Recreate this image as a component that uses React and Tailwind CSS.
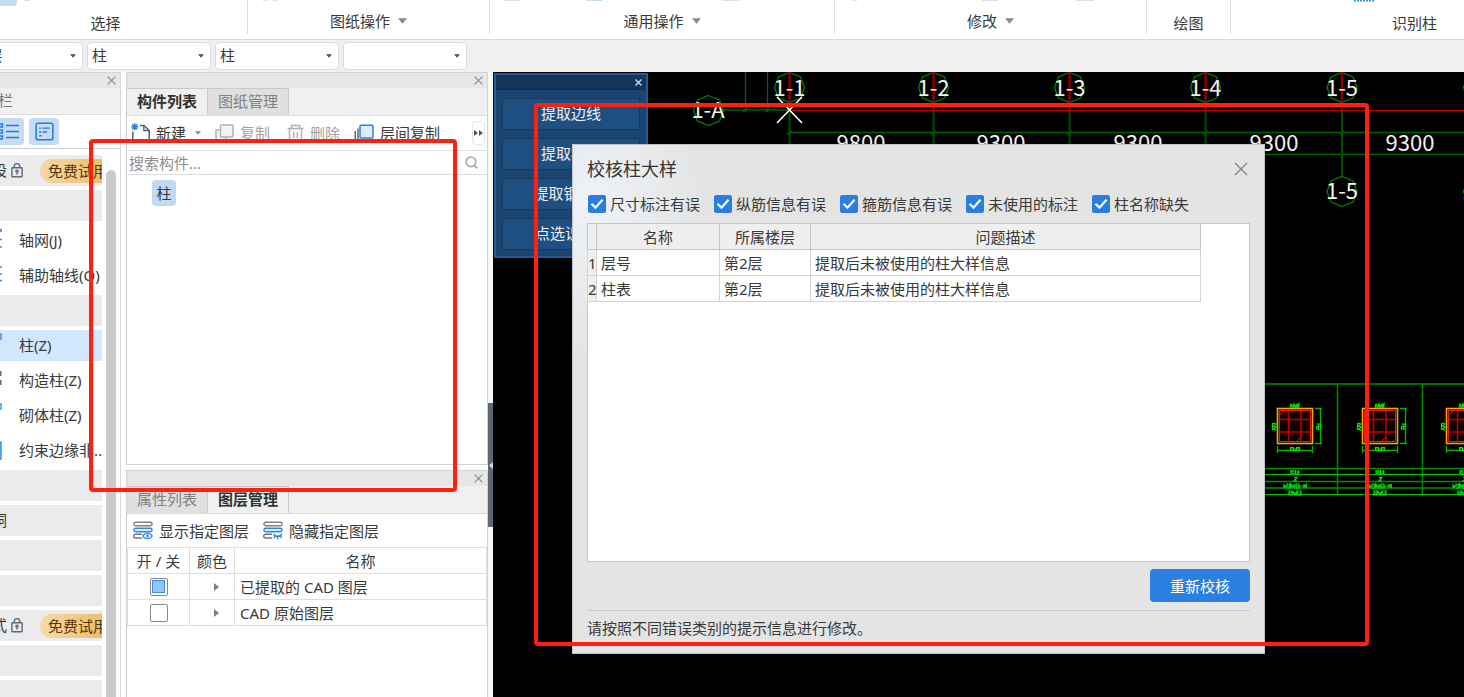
import React from "react";

const ribbonGroups = [
  { label: "选择", cls: "-ml-9 w-[284px]", low: true },
  { label: "图纸操作", cls: "w-[242px]", arrow: true },
  { label: "通用操作", cls: "w-[345px]", arrow: true },
  { label: "修改", cls: "w-[312px]", arrow: true },
  { label: "绘图", cls: "w-[84px]", low: true },
  { label: "识别柱", cls: "w-[368px]", low: true },
];

const selects = [
  { id: "floor", label: "楼层", value: "第2层" },
  { id: "category", label: "构件大类", value: "柱" },
  { id: "type", label: "构件类型", value: "柱" },
  { id: "member", label: "构件", value: "" },
];

const navItems = [
  { kind: "bar", tail: "预设", trial: true },
  { kind: "bar" },
  { kind: "item", label: "轴网(J)", icon: "grid" },
  { kind: "item", label: "辅助轴线(O)", icon: "axis" },
  { kind: "bar" },
  { kind: "item", label: "柱(Z)", icon: "col", selected: true },
  { kind: "item", label: "构造柱(Z)", icon: "dots" },
  { kind: "item", label: "砌体柱(Z)", icon: "col" },
  { kind: "item", label: "约束边缘非..", icon: "solid" },
  { kind: "bar" },
  { kind: "bar", tail: "门窗洞" },
  { kind: "bar" },
  { kind: "bar" },
  { kind: "bar", tail: "装配式", trial: true },
  { kind: "bar" },
  { kind: "bar" },
];

const checks = ["尺寸标注有误", "纵筋信息有误", "箍筋信息有误", "未使用的标注", "柱名称缺失"];

const issues = [
  { name: "层号", floor: "第2层", text: "提取后未被使用的柱大样信息" },
  { name: "柱表", floor: "第2层", text: "提取后未被使用的柱大样信息" },
];

const extractButtons = ["提取边线", "提取标注", "提取钢筋线", "点选识别 ▾"];

function Caret({ className = "" }) {
  return (
    <svg className={className} width="10" height="6" viewBox="0 0 10 6" aria-hidden="true">
      <path d="M0 0h10L5 6z" fill="currentColor" />
    </svg>
  );
}

function Cross({ size = 9, width = 1.3 }) {
  return (
    <svg width={size} height={size} viewBox="0 0 10 10" aria-hidden="true">
      <path d="M0.7 0.7l8.6 8.6M9.3 0.7L0.7 9.3" stroke="currentColor" strokeWidth={width} fill="none" />
    </svg>
  );
}

function PanelHeader() {
  return (
    <div className="flex h-4 shrink-0 items-center justify-end border-t border-[#d2d2d2] bg-[#e6e6e6] pr-1 text-[#8c8c8c]">
      <button type="button" aria-label="关闭面板">
        <Cross />
      </button>
    </div>
  );
}

function LockIcon() {
  return (
    <svg width="12" height="15" viewBox="0 0 12 15" fill="none" stroke="#5d6b7e" strokeWidth="1.4" aria-hidden="true">
      <rect x="0.9" y="4.8" width="10.2" height="9" rx="0.5" />
      <path d="M3.2 4.8V3.4a2.8 2.8 0 0 1 5.6 0v1.4" />
      <circle cx="6" cy="8.3" r="1.1" />
      <path d="M6 9.2v2.2" />
    </svg>
  );
}

function NavIcon({ kind }) {
  return (
    <svg className="shrink-0" width="16" height="26" viewBox="0 0 16 26" fill="none" stroke="#3d8bea" strokeWidth="1.4" aria-hidden="true">
      {kind === "grid" && <path d="M3 2v22M0 12.500h16M0 20h16M12 5l4-3M13 2l3 3" />}
      {kind === "axis" && <path d="M3 2v22M0 5h16M0 12h16M0 18.500h16" />}
      {kind === "col" && <rect x="2" y="2" width="13" height="5" />}
      {kind === "dots" && <path d="M14 4v5M14 13v5" stroke="#67707c" strokeWidth="3" />}
      {kind === "solid" && <path d="M1 5h14v17H1zM1 10h14M1 16h14M8 5v17" fill="#8bbcf7" />}
    </svg>
  );
}

function NavPanel() {
  return (
    <aside className="flex w-[121px] shrink-0 flex-col border-r border-[#d9d9d9] bg-white">
      <PanelHeader />
      <div className="flex h-[27px] shrink-0 items-center border-b border-[#dddddd] bg-[#f0f0f0] pb-[2px] text-[#777777]">
        <span className="flex w-[13px] justify-end whitespace-nowrap">导航栏</span>
      </div>
      <div className="flex h-[34px] shrink-0 items-center gap-[5px] border-b border-[#d2d2d2]">
        <button type="button" aria-label="列表视图" className="flex h-[27px] w-6 items-center rounded-r bg-[#c5dcf4]">
          <svg width="20" height="17" viewBox="0 0 20 17" fill="none" stroke="#2479e4" strokeWidth="1.500" aria-hidden="true">
            <path d="M6 2.500h13M6 8.500h13M6 14.500h13" />
            <rect x="-1" y="1" width="3.400" height="3" />
            <rect x="-1" y="7" width="3.400" height="3" />
            <rect x="-1" y="13" width="3.400" height="3" />
          </svg>
        </button>
        <button type="button" aria-label="卡片视图" className="flex h-[27px] w-[30px] items-center justify-center rounded bg-[#c5dcf4]">
          <svg width="19" height="19" viewBox="0 0 20 20" fill="none" stroke="#2479e4" strokeWidth="1.600" aria-hidden="true">
            <rect x="1.200" y="1.200" width="17.600" height="17.600" rx="2" />
            <path d="M4.500 6.500h2M8 6.500h7.500M4.500 10.500h2M8 10.500h4.500M4.500 14.500h2.500" strokeWidth="1.400" />
          </svg>
        </button>
      </div>
      <div className="flex min-h-0 flex-1 justify-between overflow-hidden">
        <ul className="flex w-[102px] flex-col gap-1 overflow-hidden pt-[6px]">
          {navItems.map((item, i) =>
            item.kind === "bar" ? (
              <li key={i} className="flex h-[31px] shrink-0 items-center bg-[#ebebeb]">
                <span className="flex w-[7px] shrink-0 justify-end pb-[2px] whitespace-nowrap">{item.tail}</span>
                {item.trial && (
                  <>
                    <span className="ml-1 shrink-0">
                      <LockIcon />
                    </span>
                    <span className="ml-[17px] h-6 shrink-0 rounded-full bg-linear-to-r from-[#f8d8a8] to-[#e8b953] pr-3 pl-2 leading-6 text-[#5b3408]">
                      免费试用
                    </span>
                  </>
                )}
              </li>
            ) : (
              <li
                key={i}
                className={
                  "flex h-[31px] shrink-0 items-center gap-[17px] pb-[2px] whitespace-nowrap " +
                  (item.selected ? "bg-[#d3e7fe]" : "")
                }
              >
                <span className="flex w-[2px] shrink-0 justify-end">
                  <NavIcon kind={item.icon} />
                </span>
                <a href="#nav" className="shrink-0">
                  {item.label}
                </a>
              </li>
            )
          )}
        </ul>
        <div className="mt-[21px] mr-1 w-[10px] rounded-t-full bg-[#cbcbcb]" />
      </div>
    </aside>
  );
}

function Tabs({ items, active }) {
  return (
    <div className="flex h-7 shrink-0 border-b border-[#dcdcdc] bg-[#f0f0f0]" role="tablist">
      {items.map((t, i) => (
        <button
          key={t}
          type="button"
          role="tab"
          aria-selected={i === active}
          className={
            "w-[81px] border-t border-r border-[#c8cbce] pb-[2px] " +
            (i === active ? "bg-[#f0f0f0] font-bold text-[#333333]" : "bg-[#e0e0e0] text-[#808080]")
          }
        >
          {t}
        </button>
      ))}
    </div>
  );
}

function LayerIcon({ hidden }) {
  return (
    <svg width="20" height="19" viewBox="0 0 20 19" fill="none" strokeWidth="1.400" aria-hidden="true">
      <rect x="1" y="1.200" width="18" height="3.600" rx="1.600" stroke="#7a838e" />
      <rect x="1" y="7.200" width="18" height="3.600" rx="1.600" stroke="#3385ea" fill="#dcebfd" />
      <path d="M9 13.200H2.600a1.800 1.800 0 0 0 0 3.800H9" stroke="#6e7884" />
      {hidden ? (
        <path d="M10.500 13c2 3 6.500 3 8.500 0M12 15l-1 2M14.700 15.600v2.600M17.500 15l1 2" stroke="#3385ea" />
      ) : (
        <>
          <path d="M9.800 15c2-3.500 7.400-3.500 9.400 0-2 3.500-7.400 3.500-9.400 0z" stroke="#3385ea" fill="#ffffff" />
          <circle cx="14.500" cy="15" r="1.400" fill="#3385ea" />
        </>
      )}
    </svg>
  );
}

function MemberPanel() {
  return (
    <section className="flex h-[393px] shrink-0 flex-col border-x border-b border-[#d2d2d2] bg-white">
      <PanelHeader />
      <Tabs items={["构件列表", "图纸管理"]} active={0} />
      <div className="flex h-[35px] shrink-0 items-center border-b border-[#e0e0e0] pl-1 whitespace-nowrap">
        <button type="button" className="flex items-center gap-[5px]">
          <svg width="20" height="20" viewBox="0 0 20 20" fill="none" aria-hidden="true">
            <path d="M1.800 8.500V19h16.400V7.500l-5.200-5H9" stroke="#555e69" strokeWidth="1.500" />
            <path d="M12.800 2.500v5H18" stroke="#555e69" strokeWidth="1.300" />
            <path d="M0.300 3.800h7M3.750 0.300v7M1.200 1.200l5.100 5.200M6.300 1.200L1.200 6.400" stroke="#2f80e7" strokeWidth="1.400" />
          </svg>
          新建
          <Caret className="ml-1 w-[6px] text-[#8a8a8a]" />
        </button>
        <button type="button" className="ml-[14px] flex items-center gap-[6px] text-[#a3a3a3]">
          <svg width="19" height="19" viewBox="0 0 19 19" fill="#f3f3f3" stroke="#b2b2b2" strokeWidth="1.500" aria-hidden="true">
            <path d="M5 6H1v10h10v-3" />
            <rect x="5.500" y="1" width="12.500" height="12" rx="1" />
          </svg>
          复制
        </button>
        <button type="button" className="ml-[17px] flex items-center gap-[6px] text-[#a3a3a3]">
          <svg width="17" height="18" viewBox="0 0 17 18" fill="none" stroke="#b2b2b2" strokeWidth="1.500" aria-hidden="true">
            <path d="M0.500 4.500h16M4.500 4.500v-3h8v3M2.500 4.500V17h12V4.500M6.700 8v6M10.300 8v6" />
          </svg>
          删除
        </button>
        <button type="button" className="ml-[14px] flex items-center gap-[6px]">
          <svg width="20" height="19" viewBox="0 0 20 19" fill="none" aria-hidden="true">
            <path d="M1.200 7v11M4 4.500v11.800h11.500" stroke="#555e69" strokeWidth="1.400" />
            <rect x="6" y="1.200" width="13" height="12.800" rx="1" fill="#dfedfe" stroke="#2f80e7" strokeWidth="1.500" />
          </svg>
          层间复制
        </button>
        <button type="button" aria-label="更多" className="mr-[2px] ml-auto flex h-6 w-[13px] items-center justify-center rounded border border-[#e6e6e6]">
          <svg className="shrink-0" width="9" height="6" viewBox="0 0 9 6" fill="#4c5560" aria-hidden="true">
            <path d="M0 0l4 3-4 3zM5 0l4 3-4 3z" />
          </svg>
        </button>
      </div>
      <div className="flex h-6 shrink-0 items-center border-b border-[#dcdcdc] pr-[9px] pl-[2px]">
        <input
          type="text"
          aria-label="搜索构件"
          placeholder="搜索构件..."
          className="h-5 min-w-0 flex-1 outline-none placeholder:text-[#8e8e8e]"
        />
        <svg width="13" height="13" viewBox="0 0 13 13" fill="none" stroke="#a9a9a9" strokeWidth="1.700" aria-hidden="true">
          <circle cx="6" cy="5.800" r="4.800" />
          <path d="M9.300 9.300l3 3" />
        </svg>
      </div>
      <div className="flex-1 pt-[5px] pl-[25px]">
        <button type="button" className="h-[26px] w-6 rounded-sm bg-[#c3d9f1]">
          柱
        </button>
      </div>
    </section>
  );
}

function LayerRow({ label, partial }) {
  return (
    <tr className="h-[26px]">
      <td className="border border-[#dedede] p-0">
        <label className="relative mx-auto flex size-[18px] items-center justify-center">
          <input type="checkbox" aria-label={label} className="size-[18px] appearance-none rounded-xs border border-[#8a8a8a] bg-white" />
          {partial && <span className="absolute size-[13px] border border-[#3d8bea] bg-[#93c3fb]" />}
        </label>
      </td>
      <td className="border border-[#dedede] p-0">
        <button type="button" aria-label={"展开" + label} className="flex h-5 w-full items-center justify-center pl-2">
          <svg width="5" height="8" viewBox="0 0 5 8" fill="#808080" aria-hidden="true">
            <path d="M0 0l5 4-5 4z" />
          </svg>
        </button>
      </td>
      <td className="border border-[#dedede] py-0 pr-0 pl-[5px]">{label}</td>
    </tr>
  );
}

function LayerPanel() {
  return (
    <section className="flex min-h-0 flex-1 flex-col border-x border-[#d2d2d2] bg-white">
      <PanelHeader />
      <Tabs items={["属性列表", "图层管理"]} active={1} />
      <div className="flex h-[33px] shrink-0 items-center gap-[14px] pl-[6px] whitespace-nowrap">
        <button type="button" className="flex items-center gap-[6px]">
          <LayerIcon />
          显示指定图层
        </button>
        <button type="button" className="flex items-center gap-[6px]">
          <LayerIcon hidden />
          隐藏指定图层
        </button>
      </div>
      <table className="w-full table-fixed border-collapse">
        <colgroup>
          <col className="w-[62px]" />
          <col className="w-[45px]" />
          <col />
        </colgroup>
        <thead>
          <tr className="h-[26px]">
            <th className="border border-[#dedede] p-0 font-normal">开 / 关</th>
            <th className="border border-[#dedede] p-0 font-normal">颜色</th>
            <th className="border border-[#dedede] p-0 font-normal">名称</th>
          </tr>
        </thead>
        <tbody>
          <LayerRow label="已提取的 CAD 图层" partial />
          <LayerRow label="CAD 原始图层" />
        </tbody>
      </table>
    </section>
  );
}

const octagon = (cx, cy) =>
  [[0, -15], [11, -10.5], [15, 0], [11, 10.5], [0, 15], [-11, 10.5], [-15, 0], [-11, -10.5]]
    .map(([x, y]) => `${cx + x},${cy + y}`)
    .join(" ");

const axes = [
  { x: 789.5, t: "1-1" },
  { x: 933.5, t: "1-2" },
  { x: 1069.5, t: "1-3" },
  { x: 1205.5, t: "1-4" },
  { x: 1342, t: "1-5" },
  { x: 1478.5, t: "1-6" },
];

const spans = [
  [861, "9800"],
  [1001, "9300"],
  [1138, "9300"],
  [1274, "9300"],
  [1410, "9300"],
];

function ColumnDetail({ x }) {
  return (
    <g transform={`translate(${x} 408)`}>
      <rect x="0.500" y="0.500" width="35" height="35" fill="#100000" />
      <path d="M11.500 2v32M24 2v32M2 11.500h32M2 24h32" stroke="#c00000" strokeWidth="1.500" />
      <path d="M2.500 2.500h31v31h-31zM3 7l4-4M20 33l4-4" stroke="#ef1400" fill="none" />
      <rect x="0.500" y="0.500" width="35" height="35" fill="none" stroke="#f5a800" strokeWidth="1.600" />
      <g stroke="#00b400" fill="none">
        <path d="M38 0.500h7M38 35.500h7M43.500 0v36" strokeWidth="1.300" />
        <path d="M0.500 38v7M35.500 38v7M0 42.500h36" strokeWidth="1.300" />
      </g>
      <g stroke="#00e800" strokeWidth="1.200" fill="none">
        <path d="M13 -0.800l1-3 2 2 1-2.500 1 3 2-2.500v3l2-3.500v3.500M13 -0.800h9" />
        <path d="M-4 15l3 1-3 2 3.500 1-3 2 3 1.500M-4.500 15v7" />
        <path d="M39.500 16h4v2.500h-4v2.500h4M41.500 16v6" />
        <path d="M13.500 42.500v-3h3v3h3v-3h3v3M14 41h9" />
        <path d="M14 62v4M14 64l3-2M14 64l3 2M18.500 62v4h3v-4M16 64h7" />
        <path d="M17 69.500h3l-3 3.500h3" />
        <path d="M7 76v4l3-2v-2h3v4h-3M14 80v-4l3 4v-4M19 76h3v4h-3zM23 78h3M27 76v4M30 76l-2 2 2 2M7 78h23" />
        <path d="M12 83v4h3v-4zM16 83l2 4 2-4M20 87v-4h4v4zM12 85h12" />
      </g>
    </g>
  );
}

function CadDrawing() {
  return (
    <svg
      className="absolute top-0 left-0 h-[625px] w-[971px]"
      viewBox="493 72 971 625"
      role="img"
      aria-label="CAD 图纸"
    >
      <g stroke="#006400" strokeWidth="1.300" fill="none">
        <path d="M745.500 72v40M767.500 72v40M723 110h66M789 132.500h675M789 154.500h675" />
        <path d="M743 112l5-5M765 112l5-5" />
        {axes.map((a) => (
          <path key={a.t} d={`M${a.x} 110v67M${a.x - 2} 134.500l4-4`} stroke="#005000" strokeWidth="2" />
        ))}
        {axes.map((a) => (
          <polygon key={a.t} points={octagon(a.x, 87.5)} stroke="#008200" />
        ))}
        <polygon points={octagon(708.5, 110.5)} stroke="#008200" />
        <polygon points={octagon(1342, 191.5)} stroke="#008200" />
        <polygon points={octagon(1478.5, 191.5)} stroke="#008200" />
      </g>
      <path d="M789 110.500h675" stroke="#c00000" />
      {axes.map((a) => (
        <path key={a.t} d={`M${a.x} 72v38`} stroke="#8c0000" strokeWidth="2.400" />
      ))}
      <path d="M777 97l25 26M802 97l-25 26" stroke="#ffffff" strokeWidth="1.600" />
      <g fill="#f2f2f2" className="font-['Noto_Sans_CJK_SC',sans-serif] text-[22px]" textAnchor="middle">
        {axes.map((a) => (
          <text key={a.t} x={a.x} y="96">
            {a.t}
          </text>
        ))}
        <text x="708" y="118">1-A</text>
        <text x="1342" y="199">1-5</text>
        <text x="1478" y="199">1-6</text>
        {spans.map(([x, t]) => (
          <text key={x} x={x} y="151">
            {t}
          </text>
        ))}
      </g>
      <g stroke="#008c00" strokeWidth="1.500">
        <path d="M1180 384h284M1337.500 384v111M1422.500 384v111M1180 468.500h284M1180 481.500h284M1180 488h284" />
        <path d="M1180 474.500h284M1180 494.500h284" stroke="#00c400" strokeWidth="1" />
      </g>
      <ColumnDetail x={1277} />
      <ColumnDetail x={1362} />
      <ColumnDetail x={1446} />
    </svg>
  );
}

function ExtractPanel() {
  return (
    <div className="absolute top-px left-px w-[154px] border-2 border-[#235b96] bg-[#1c4470]">
      <div className="flex h-[15px] items-center justify-end border-b border-[#122c4b] bg-[#163559] pr-1 text-[#bcd6f5]">
        <button type="button" aria-label="关闭提取面板">
          <Cross size={7} width={2} />
        </button>
      </div>
      <div className="flex flex-col gap-2 px-[6px] pt-2 pb-[6px]">
        {extractButtons.map((b) => (
          <button key={b} type="button" className="h-8 border border-[#163a61] bg-[#1f4f80] pb-[2px] text-[#e9f0f8]">
            {b}
          </button>
        ))}
      </div>
    </div>
  );
}

function CheckDialog() {
  return (
    <div
      role="dialog"
      aria-labelledby="dlg-title"
      className="absolute top-[72px] left-[79px] flex h-[510px] w-[693px] flex-col border border-[#bfc3c6] bg-[#e4e4e4] bg-[radial-gradient(ellipse_110px_150px_at_20px_60px,#eef2f7,transparent)] px-[14px]"
    >
      <div className="flex h-12 shrink-0 items-center justify-between pr-[2px]">
        <h2 id="dlg-title" className="text-[18px] leading-6 text-[#333333]">
          校核柱大样
        </h2>
        <button type="button" aria-label="关闭" className="text-[#858585]">
          <Cross size={14} width={0.9} />
        </button>
      </div>
      <div className="flex h-[30px] shrink-0 gap-[14px] pl-px">
        {checks.map((c) => (
          <label key={c} className="relative flex h-[22px] items-center gap-1 whitespace-nowrap">
            <input type="checkbox" defaultChecked className="peer size-[18px] appearance-none rounded-xs border border-[#8a8a8a] bg-white checked:border-[#2a7de1] checked:bg-[#2a7de1]" />
            <svg className="pointer-events-none absolute left-[2px] hidden peer-checked:block" width="14" height="12" viewBox="0 0 14 12" fill="none" stroke="#ffffff" strokeWidth="2.200" aria-hidden="true">
              <path d="M1.500 5.800l4 3.900 7-8" />
            </svg>
            {c}
          </label>
        ))}
      </div>
      <div className="h-[339px] shrink-0 border border-[#c6c6c6] bg-white">
        <table className="-mt-px -ml-px w-[614px] table-fixed border-collapse">
          <colgroup>
            <col className="w-[9px]" />
            <col className="w-[123px]" />
            <col className="w-[91px]" />
            <col />
          </colgroup>
          <thead>
            <tr className="h-[26px] bg-[#efefef]">
              <th className="border border-[#c6c6c6] p-0" aria-label="序号" />
              <th className="border border-[#c6c6c6] p-0 font-normal">名称</th>
              <th className="border border-[#c6c6c6] p-0 font-normal">所属楼层</th>
              <th className="border border-[#c6c6c6] p-0 font-normal">问题描述</th>
            </tr>
          </thead>
          <tbody>
            {issues.map((r, i) => (
              <tr key={r.name} className="h-[26px]">
                <td className="border border-[#d4d4d4] bg-[#efefef] p-0 text-center">{i + 1}</td>
                <td className="border border-[#d4d4d4] py-0 pr-0 pl-1">{r.name}</td>
                <td className="border border-[#d4d4d4] py-0 pr-0 pl-1">{r.floor}</td>
                <td className="border border-[#d4d4d4] py-0 pr-0 pl-1">{r.text}</td>
              </tr>
            ))}
          </tbody>
        </table>
      </div>
      <div className="flex h-[49px] shrink-0 justify-end border-b border-[#cccccc] pt-[7px]">
        <button type="button" className="h-[33px] w-[100px] rounded bg-[#2b7fe3] text-white">
          重新校核
        </button>
      </div>
      <p className="pt-[7px]">请按照不同错误类别的提示信息进行修改。</p>
    </div>
  );
}

export default function App() {
  return (
    <div className="relative flex h-screen flex-col overflow-hidden bg-white font-['Noto_Sans','Noto_Sans_CJK_SC',sans-serif] text-[15px] leading-5 text-[#3a3a3a]">
      <header className="relative flex h-10 shrink-0 overflow-hidden border-b border-[#d9d9d9] bg-white">
        {ribbonGroups.map((g) => (
          <div key={g.label} className={"flex h-[34px] shrink-0 justify-center border-r border-[#dcdcdc] " + g.cls}>
            <button
              type="button"
              className={"flex items-center gap-2 whitespace-nowrap " + (g.low ? "pt-3" : "pt-2")}
            >
              {g.label}
              {g.arrow && <Caret className="w-[9px] text-[#8a8a8a]" />}
            </button>
          </div>
        ))}
        <svg className="absolute top-0 left-0 h-[6px] w-[1464px]" viewBox="0 0 1464 6" aria-hidden="true">
          <rect x="-8" y="-8" width="25" height="14" rx="3" fill="#c5dcf4" />
          <path d="M24 0.500h6M263 0.500h4M273 0.500h4M504 0.500h16M586 0.500h10M723 0.500h16M853 0.500h4M982 0.500h16M1076 0.500h18" stroke="#dedede" />
          <path d="M594 0.500h8" stroke="#bcd8f8" />
          <path d="M1354 0.500h20" stroke="#3d8bea" strokeWidth="2" strokeDasharray="2 1" />
        </svg>
      </header>

      <div className="flex h-8 shrink-0 items-center gap-1 overflow-hidden bg-[#f0f0f0]">
        {selects.map((s, i) => (
          <div key={s.id} className={"relative w-[124px] shrink-0 " + (i === 0 ? "-ml-[41px]" : "")}>
            <select
              aria-label={s.label}
              className="h-7 w-full appearance-none rounded border border-[#dcdcdc] bg-white pb-[2px] pl-1 outline-none"
            >
              <option>{s.value}</option>
            </select>
            <Caret className="pointer-events-none absolute top-[11px] right-[7px] w-[6px] text-[#4a5058]" />
          </div>
        ))}
      </div>

      <main className="flex min-h-0 flex-1">
        <NavPanel />
        <div className="ml-[5px] flex w-[362px] shrink-0 flex-col gap-[5px]">
          <MemberPanel />
          <LayerPanel />
        </div>
        <div className="w-[5px] shrink-0 bg-[#f7f7f7] pt-[331px]">
          <button type="button" aria-label="收起面板" className="flex h-[124px] w-full items-center justify-center bg-[#5d6873]">
            <svg width="4" height="7" viewBox="0 0 4 7" fill="#d5d9dd" aria-hidden="true">
              <path d="M4 0v7L0 3.500z" />
            </svg>
          </button>
        </div>
        <section className="relative min-w-0 flex-1 overflow-hidden bg-black">
          <CadDrawing />
          <ExtractPanel />
          <CheckDialog />
        </section>
      </main>

      <div className="pointer-events-none absolute top-[139px] left-[89px] h-[353px] w-[368px] rounded border-4 border-[#ff2012]" />
      <div className="pointer-events-none absolute top-[103px] left-[534px] h-[543px] w-[835px] rounded border-4 border-[#ff2012]" />
    </div>
  );
}
